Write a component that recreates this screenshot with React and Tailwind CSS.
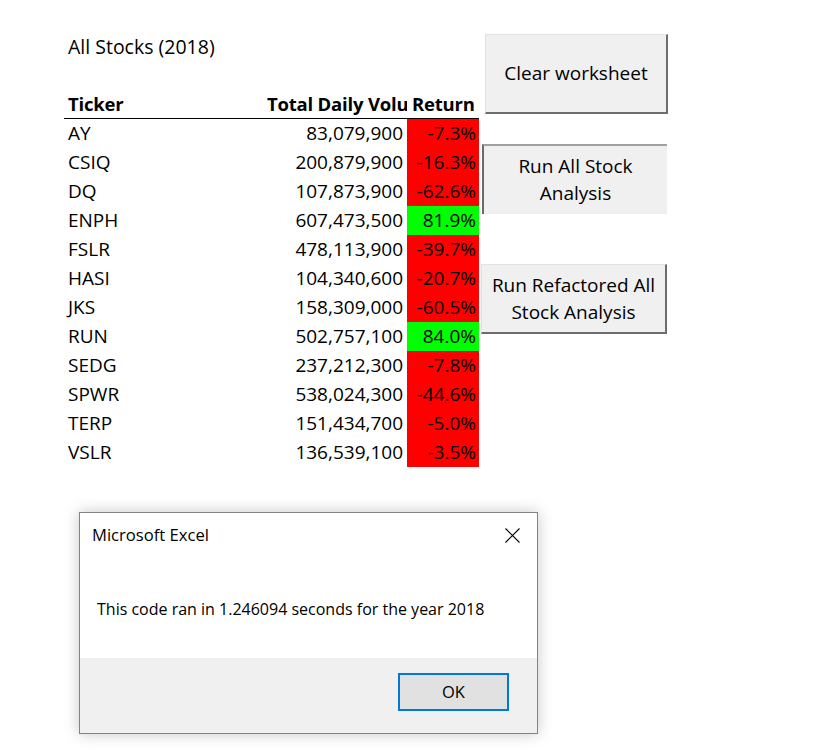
import React from "react";

const rows = [
  ["AY", "83,079,900", "-7.3%", false],
  ["CSIQ", "200,879,900", "-16.3%", false],
  ["DQ", "107,873,900", "-62.6%", false],
  ["ENPH", "607,473,500", "81.9%", true],
  ["FSLR", "478,113,900", "-39.7%", false],
  ["HASI", "104,340,600", "-20.7%", false],
  ["JKS", "158,309,000", "-60.5%", false],
  ["RUN", "502,757,100", "84.0%", true],
  ["SEDG", "237,212,300", "-7.8%", false],
  ["SPWR", "538,024,300", "-44.6%", false],
  ["TERP", "151,434,700", "-5.0%", false],
  ["VSLR", "136,539,100", "-3.5%", false],
];

export default function App() {
  return (
    <div className="w-[813px] h-[753px] bg-white overflow-hidden text-black pt-[32px]">
      <div className="flex font-['Open_Sans',sans-serif] text-[19px]">
        {/* sheet table */}
        <div className="ml-[64px] w-[415px] flex flex-col">
          <div className="h-[29px] flex items-center pl-[4px] whitespace-nowrap text-[19.5px]">All Stocks (2018)</div>
          <div className="h-[29px]" />
          <div className="h-[29px] flex items-center font-bold border-b border-black text-[18.5px] tracking-[-0.2px]">
            <div className="w-[200px] pl-[4px]">Ticker</div>
            <div className="w-[143px] pl-[3px] overflow-hidden whitespace-nowrap">Total Daily Volu</div>
            <div className="w-[72px] pl-[5px] whitespace-nowrap">Return</div>
          </div>
          {rows.map(([t, v, r, pos]) => (
            <div key={t} className="h-[29px] flex items-stretch">
              <div className="w-[200px] pl-[4px] flex items-center">{t}</div>
              <div className="w-[143px] pr-[4px] flex items-center justify-end">{v}</div>
              <div
                className={
                  "w-[72px] pr-[3px] flex items-center justify-end " +
                  (pos ? "bg-[#00ff00]" : "bg-[#ff0000]")
                }
              >
                {r}
              </div>
            </div>
          ))}
        </div>

        {/* buttons */}
        <div className="ml-[2px] flex flex-col items-start text-[19px] leading-[27px]">
          <div className="mt-[2px] ml-[4px] w-[183px] h-[80px] bg-[#f0f0f0] border-t border-l border-[#e3e3e3] border-r-2 border-b-2 border-r-[#6d6d6d] border-b-[#6d6d6d] flex items-center justify-center text-center">
            Clear worksheet
          </div>
          <div className="mt-[30px] ml-[1px] w-[185px] h-[70px] bg-[#f0f0f0] border-t-2 border-l-2 border-t-[#a0a0a0] border-l-[#696969] flex items-center justify-center text-center">
            Run All Stock
            <br />
            Analysis
          </div>
          <div className="mt-[50px] w-[186px] h-[70px] bg-[#f0f0f0] border-t border-l border-[#e3e3e3] border-r-2 border-b-2 border-r-[#6d6d6d] border-b-[#6d6d6d] flex items-center justify-center text-center">
            Run Refactored All
            <br />
            Stock Analysis
          </div>
        </div>
      </div>

      {/* dialog */}
      <div className="mt-[45px] ml-[79px] w-[459px] h-[222px] border border-[#838383] bg-white shadow-[0_0_14px_rgba(0,0,0,0.22)] flex flex-col font-['Open_Sans',sans-serif] text-[16px]">
        <div className="flex-1 flex flex-col">
          <div className="h-[44px] flex items-center justify-between pl-[12px] pr-[17px] pt-[1px]">
            <span className="text-[16.6px]">Microsoft Excel</span>
            <svg width="15" height="15" viewBox="0 0 15 15" className="block">
              <path d="M0.5 0.5 L14.5 14.5 M14.5 0.5 L0.5 14.5" stroke="#000" strokeWidth="1.1" fill="none" />
            </svg>
          </div>
          <div className="mt-[40px] pl-[17px] whitespace-nowrap">
            This code ran in 1.246094 seconds for the year 2018
          </div>
        </div>
        <div className="h-[75px] bg-[#f0f0f0] flex justify-end pt-[15px] pr-[28px]">
          <div className="w-[111px] h-[38px] border-2 border-[#0078d7] bg-[#e1e1e1] flex items-center justify-center text-[16.5px]">
            OK
          </div>
        </div>
      </div>
    </div>
  );
}
